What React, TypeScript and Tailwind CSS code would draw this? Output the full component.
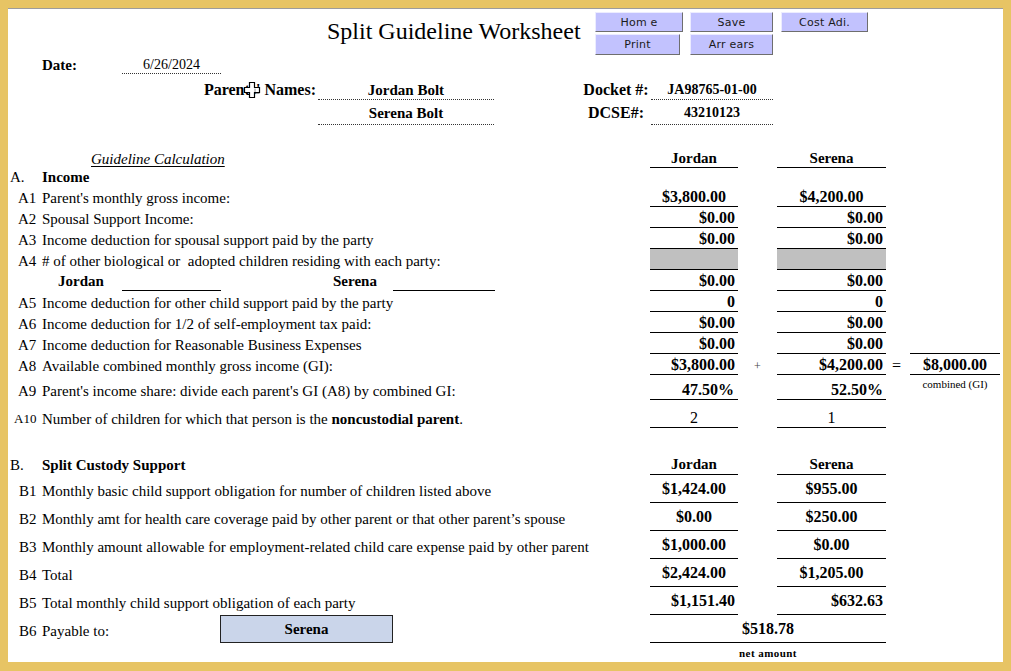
import React from "react";

const F = "font-['Liberation_Serif','Times_New_Roman',serif]";

type CellProps = {
  children?: React.ReactNode;
  cls: string;
};

function Lbl({ code, codeCls, children, cls }: { code?: string; codeCls: string; children?: React.ReactNode; cls: string }) {
  return (
    <div className={cls}>
      <span className={codeCls}>{code}</span>
      <span className="whitespace-nowrap">{children}</span>
    </div>
  );
}

function Btn({ cls, children }: CellProps) {
  return (
    <div
      className={`${cls} flex items-center justify-center bg-[#C2C2FE] border border-t-[#ECECFF] border-l-[#ECECFF] border-r-[#6E6E6E] border-b-[#6E6E6E] text-[11px] text-[#1a1a1a] font-['DejaVu_Sans','Liberation_Sans',sans-serif] tracking-[0.02em] leading-none`}
    >
      {children}
    </div>
  );
}

const J = "w-[88px] h-full flex border-b border-black text-[16px] font-bold leading-[18px]";
const S = "w-[109px] h-full flex border-b border-black text-[16px] font-bold leading-[18px]";

function ARow({
  h,
  label,
  j,
  s,
  jCls,
  sCls,
  mid,
  eq,
  comb,
  combCls,
}: {
  h: string;
  label: React.ReactNode;
  j?: React.ReactNode;
  s?: React.ReactNode;
  jCls: string;
  sCls: string;
  mid?: React.ReactNode;
  eq?: React.ReactNode;
  comb?: React.ReactNode;
  combCls?: string;
}) {
  return (
    <div className={`${h} flex`}>
      <div className="w-[642px] h-full flex items-end text-[15px] leading-[18px]">{label}</div>
      <div className={`${J} ${jCls}`}>{j}</div>
      <div className="w-[39px] h-full flex items-end justify-center text-[12px] leading-[18px] text-[#444]">{mid}</div>
      <div className={`${S} ${sCls}`}>{s}</div>
      <div className="w-[24px] h-full flex items-end text-[16px] leading-[18px] pl-[6px]">{eq}</div>
      <div className={`w-[90px] h-full flex ${combCls ?? ""}`}>{comb}</div>
    </div>
  );
}

const JR = "items-end justify-end pr-[3px]";
const JC = "items-end justify-center";
const BC = "items-center justify-center";
const BR = "items-center justify-end pr-[3px]";

function BRow({ code, label, j, s, jCls, sCls }: { code: string; label: string; j: string; s: string; jCls: string; sCls: string }) {
  return (
    <div className="h-[28px] flex">
      <div className="w-[642px] h-full flex items-center pt-[4px] text-[15px] leading-[18px]">
        <span className="inline-block w-[34px] pl-[11px]">{code}</span>
        <span className="whitespace-nowrap">{label}</span>
      </div>
      <div className={`${J} ${jCls}`}>{j}</div>
      <div className="w-[39px]" />
      <div className={`${S} ${sCls}`}>{s}</div>
    </div>
  );
}

function Cursor() {
  return (
    <svg className="absolute left-[235px] top-[7px]" width="18" height="18" viewBox="0 0 18 18">
      <path d="M6.5 1.5h5v5h5v5h-5v5h-5v-5h-5v-5h5z" fill="#fff" stroke="#000" strokeWidth="1.2" />
      <path d="M12 7.5v4.5h-0.5M12 12.5h4.5" fill="none" stroke="#000" strokeWidth="0.8" opacity="0.5" />
    </svg>
  );
}

export default function App() {
  return (
    <div className={`w-[1011px] h-[671px] bg-[#E7C464] pt-[8px] pl-[8px] ${F} text-black`}>
      <div className="w-[995px] h-[654px] bg-white border-t border-[#9c9c9c] flex flex-col">
        {/* Title + buttons */}
        <div className="h-[48px] flex">
          <div className="w-[319px]" />
          <div className="w-[268px] pt-[8px] text-[24px] leading-[28px] whitespace-nowrap">Split Guideline Worksheet</div>
          <div className="flex flex-col gap-[2px] pt-[3px]">
            <div className="flex">
              <Btn cls="w-[88px] h-[20px]">Hom e</Btn>
              <div className="w-[7px]" />
              <Btn cls="w-[83px] h-[20px]">Save</Btn>
              <div className="w-[8px]" />
              <Btn cls="w-[87px] h-[20px]">Cost Adi.</Btn>
            </div>
            <div className="flex">
              <Btn cls="w-[85px] h-[21px]">Print</Btn>
              <div className="w-[10px]" />
              <Btn cls="w-[83px] h-[21px]">Arr ears</Btn>
            </div>
          </div>
        </div>

        {/* Date */}
        <div className="h-[17px] flex items-end">
          <div className="w-[34px]" />
          <div className="w-[80px] text-[15px] font-bold leading-[17px] self-center">Date:</div>
          <div className="w-[99px] h-full flex items-end justify-center border-b border-dotted border-[#333] text-[14px] leading-[16px]">
            6/26/2024
          </div>
        </div>

        {/* Parents names */}
        <div className="h-[26px] flex relative">
          <div className="w-[308px] h-full flex items-end justify-end text-[16px] font-bold leading-[18px] pb-[1px]">Parents' Names:</div>
          <div className="w-[2px]" />
          <div className="w-[176px] h-full flex items-end justify-center border-b border-dotted border-[#333] text-[15px] font-bold leading-[18px]">
            Jordan Bolt
          </div>
          <div className="w-[88px]" />
          <div className="w-[68px] h-full flex items-end justify-center text-[16px] font-bold leading-[18px] pb-[1px] whitespace-nowrap">
            Docket #:
          </div>
          <div className="w-[1px]" />
          <div className="w-[122px] h-full flex items-end justify-center border-b border-dotted border-[#333] text-[14px] font-bold leading-[18px]">
            JA98765-01-00
          </div>
          <Cursor />
        </div>

        <div className="h-[25px] flex">
          <div className="w-[310px]" />
          <div className="w-[176px] h-full flex items-end justify-center border-b border-dotted border-[#333] text-[15px] font-bold leading-[18px] pb-[2px]">
            Serena Bolt
          </div>
          <div className="w-[88px]" />
          <div className="w-[68px] h-full flex items-end justify-center text-[16px] font-bold leading-[18px] pb-[3px]">DCSE#:</div>
          <div className="w-[1px]" />
          <div className="w-[122px] h-full flex items-end justify-center border-b border-dotted border-[#333] text-[14px] font-bold leading-[18px] pb-[2px]">
            43210123
          </div>
        </div>

        <div className="h-[24px]" />

        {/* Guideline header */}
        <div className="h-[19px] flex">
          <div className="w-[642px] h-full flex items-end text-[15px] leading-[18px]">
            <span className="w-[83px]" />
            <span className="italic underline underline-offset-2">Guideline Calculation</span>
          </div>
          <div className="w-[88px] h-full flex items-end justify-center border-b border-black text-[15px] font-bold leading-[18px]">Jordan</div>
          <div className="w-[39px]" />
          <div className="w-[109px] h-full flex items-end justify-center border-b border-black text-[15px] font-bold leading-[18px]">Serena</div>
        </div>

        <div className="h-[18px] flex items-center text-[15px] leading-[18px]">
          <span className="inline-block w-[34px] pl-[2px]">A.</span>
          <span className="font-bold">Income</span>
        </div>

        <ARow h="h-[21px]" label={<Lbl code="A1" codeCls="inline-block w-[34px] pl-[10px]" cls="flex">Parent's monthly gross income:</Lbl>} j="$3,800.00" s="$4,200.00" jCls={JC} sCls={JC} />
        <ARow h="h-[21px]" label={<Lbl code="A2" codeCls="inline-block w-[34px] pl-[10px]" cls="flex">Spousal Support Income:</Lbl>} j="$0.00" s="$0.00" jCls={JR} sCls={JR} />
        <ARow h="h-[21px]" label={<Lbl code="A3" codeCls="inline-block w-[34px] pl-[10px]" cls="flex">Income deduction for spousal support paid by the party</Lbl>} j="$0.00" s="$0.00" jCls={JR} sCls={JR} />
        <ARow
          h="h-[21px]"
          label={<Lbl code="A4" codeCls="inline-block w-[34px] pl-[10px]" cls="flex"># of other biological or&nbsp; adopted children residing with each party:</Lbl>}
          jCls="bg-[#C0C0C0]"
          sCls="bg-[#C0C0C0]"
        />
        <ARow
          h="h-[21px]"
          label={
            <div className="flex h-full items-end font-bold">
              <span className="w-[50px]" />
              <span className="w-[64px] pb-[1px]">Jordan</span>
              <span className="w-[99px] h-[1px] bg-black mb-0" />
              <span className="w-[112px]" />
              <span className="w-[60px] pb-[1px]">Serena</span>
              <span className="w-[102px] h-[1px] bg-black" />
            </div>
          }
          j="$0.00"
          s="$0.00"
          jCls={JR}
          sCls={JR}
        />
        <ARow h="h-[21px]" label={<Lbl code="A5" codeCls="inline-block w-[34px] pl-[10px]" cls="flex">Income deduction for other child support paid by the party</Lbl>} j="0" s="0" jCls={JR} sCls={JR} />
        <ARow h="h-[21px]" label={<Lbl code="A6" codeCls="inline-block w-[34px] pl-[10px]" cls="flex">Income deduction for 1/2 of self-employment tax paid:</Lbl>} j="$0.00" s="$0.00" jCls={JR} sCls={JR} />
        <ARow
          h="h-[21px]"
          label={<Lbl code="A7" codeCls="inline-block w-[34px] pl-[10px]" cls="flex">Income deduction for Reasonable Business Expenses</Lbl>}
          j="$0.00"
          s="$0.00"
          jCls={JR}
          sCls={JR}
          combCls="border-b border-black"
        />
        <ARow
          h="h-[21px]"
          label={<Lbl code="A8" codeCls="inline-block w-[34px] pl-[10px]" cls="flex">Available combined monthly gross income (GI):</Lbl>}
          j="$3,800.00"
          s="$4,200.00"
          jCls={JR}
          sCls={JR}
          mid="+"
          eq="="
          comb="$8,000.00"
          combCls="border-b border-black items-end justify-center text-[16px] font-bold leading-[18px]"
        />
        <ARow
          h="h-[25px]"
          label={<Lbl code="A9" codeCls="inline-block w-[34px] pl-[10px]" cls="flex">Parent's income share: divide each parent's GI (A8) by combined GI:</Lbl>}
          j="47.50%"
          s="52.50%"
          jCls="items-end justify-end pr-[4px]"
          sCls={JR}
          comb="combined (GI)"
          combCls="justify-center text-[11px] leading-[14px] pt-[2px]"
        />
        <ARow
          h="h-[28px]"
          label={
            <div className="flex items-end">
              <span className="inline-block w-[34px] pl-[6px] text-[13px]">A10</span>
              <span className="whitespace-nowrap">
                Number of children for which that person is the <b>noncustodial parent</b>.
              </span>
            </div>
          }
          j="2"
          s="1"
          jCls="items-end justify-center !font-normal"
          sCls="items-end justify-center !font-normal"
        />

        <div className="h-[25px]" />

        {/* B heading */}
        <div className="h-[22px] flex">
          <div className="w-[642px] h-full flex items-end pb-[1px] text-[15px] leading-[18px]">
            <span className="inline-block w-[34px] pl-[2px]">B.</span>
            <span className="font-bold">Split Custody Support</span>
          </div>
          <div className="w-[88px] h-full flex items-end justify-center pb-[1px] border-b border-black text-[15px] font-bold leading-[18px]">Jordan</div>
          <div className="w-[39px]" />
          <div className="w-[109px] h-full flex items-end justify-center pb-[1px] border-b border-black text-[15px] font-bold leading-[18px]">Serena</div>
        </div>

        <BRow code="B1" label="Monthly basic child support obligation for number of children listed above" j="$1,424.00" s="$955.00" jCls={BC} sCls={BC} />
        <BRow code="B2" label="Monthly amt for health care coverage paid by other parent or that other parent’s spouse" j="$0.00" s="$250.00" jCls={BC} sCls={BC} />
        <BRow code="B3" label="Monthly amount allowable for employment-related child care expense paid by other parent" j="$1,000.00" s="$0.00" jCls={BC} sCls={BC} />
        <BRow code="B4" label="Total" j="$2,424.00" s="$1,205.00" jCls={BC} sCls={BC} />
        <BRow code="B5" label="Total monthly child support obligation of each party" j="$1,151.40" s="$632.63" jCls={BR} sCls={BR} />

        <div className="h-[28px] flex">
          <div className="w-[212px] h-full flex items-center pt-[4px] text-[15px] leading-[18px]">
            <span className="inline-block w-[34px] pl-[11px]">B6</span>
            <span>Payable to:</span>
          </div>
          <div className="w-[173px] h-full flex items-center justify-center bg-[#CAD5EA] border border-[#222] text-[15px] font-bold leading-[18px]">
            Serena
          </div>
          <div className="w-[257px]" />
          <div className="w-[236px] h-full flex items-center justify-center border-b border-black text-[16px] font-bold leading-[18px]">
            $518.78
          </div>
        </div>
        <div className="h-[19px] flex">
          <div className="w-[642px]" />
          <div className="w-[236px] flex items-center justify-center text-[11px] font-bold leading-[14px] tracking-[0.04em]">net amount</div>
        </div>
      </div>
    </div>
  );
}
